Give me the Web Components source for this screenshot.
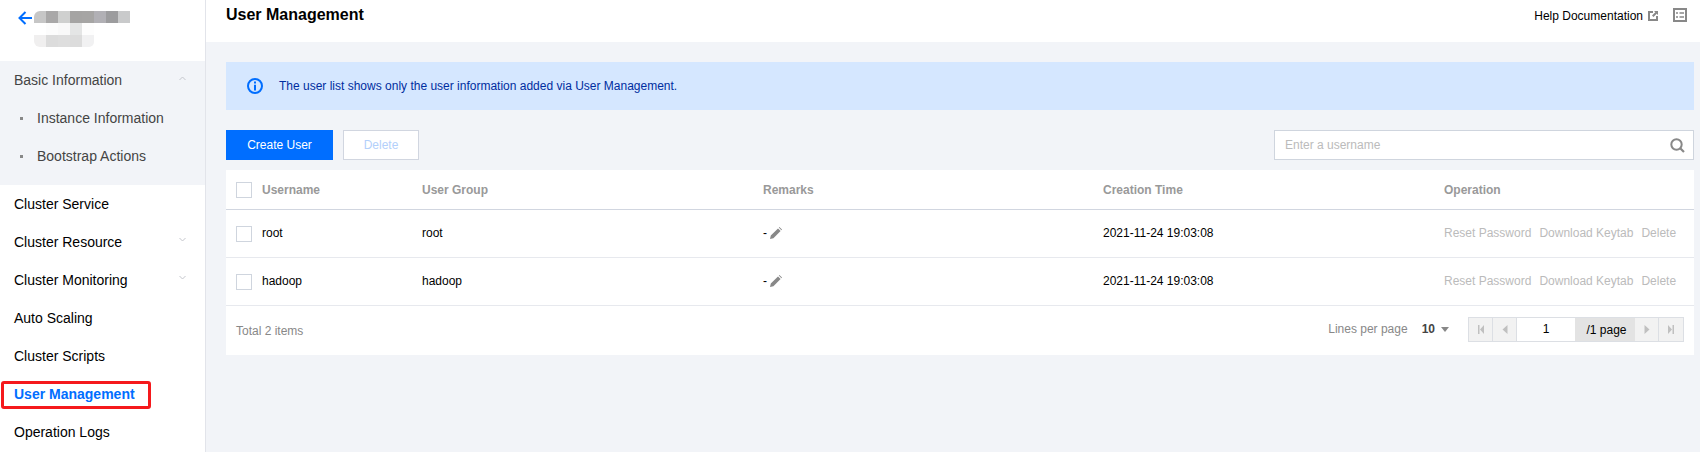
<!DOCTYPE html>
<html>
<head>
<meta charset="utf-8">
<title>User Management</title>
<style>
  html, body { margin: 0; height: 452px; overflow: hidden; background: #f2f4f8; }
  body { font: 12px "Liberation Sans", Arial, sans-serif; color: #000; }
</style>
</head>
<body>
<app-shell>
  <side-nav slot="side">
    <nav-group title="Basic Information">
      <nav-item sub>Instance Information</nav-item>
      <nav-item sub>Bootstrap Actions</nav-item>
    </nav-group>
    <nav-item>Cluster Service</nav-item>
    <nav-item arrow>Cluster Resource</nav-item>
    <nav-item arrow>Cluster Monitoring</nav-item>
    <nav-item>Auto Scaling</nav-item>
    <nav-item>Cluster Scripts</nav-item>
    <nav-item active>User Management</nav-item>
    <nav-item>Operation Logs</nav-item>
  </side-nav>
  <page-header slot="head" title="User Management"></page-header>
  <notice-bar>The user list shows only the user information added via User Management.</notice-bar>
  <tool-bar></tool-bar>
  <user-table>
    <user-row name="root" group="root" time="2021-11-24 19:03:08"></user-row>
    <user-row name="hadoop" group="hadoop" time="2021-11-24 19:03:08"></user-row>
  </user-table>
</app-shell>

<script>
// page frame: sidebar on the left, header and content on the right
class AppShell extends HTMLElement {
  constructor() {
    super();
    this.attachShadow({ mode: "open" }).innerHTML = `
      <style>
        :host { display: flex; height: 452px; }
        .main { flex: 1; min-width: 0; display: flex; flex-direction: column; }
        .content { padding: 20px 6px 0 20px; display: flex; flex-direction: column; }
      </style>
      <slot name="side"></slot>
      <div class="main">
        <slot name="head"></slot>
        <div class="content"><slot></slot></div>
      </div>`;
  }
}
customElements.define("app-shell", AppShell);

class SideNav extends HTMLElement {
  constructor() {
    super();
    this.attachShadow({ mode: "open" }).innerHTML = `
      <style>
        :host { display: block; flex: none; width: 205px; height: 452px; background: #fff; border-right: 1px solid #e2e4ea; overflow: hidden; }
        .top { height: 61px; display: flex; padding: 11px 0 0 18px; box-sizing: border-box; }
        .back { flex: none; }
        .mosaic { margin-left: 2px; display: grid; grid-template-columns: repeat(8, 12px); grid-auto-rows: 12px; align-self: flex-start; }
        .mosaic i { display: block; }
        .mosaic i:first-child { border-top-left-radius: 6px; }
        .mosaic i:nth-child(17) { border-bottom-left-radius: 6px; }
        .mosaic i:nth-child(21) { border-bottom-right-radius: 5px; }
      </style>
      <div class="top">
        <svg class="back" width="14" height="14" viewBox="0 0 14 14" fill="none" stroke="#006eff" stroke-width="2">
          <path d="M14 7H2M7.500 1 1.500 7l6 6"/>
        </svg>
        <div class="mosaic" id="logo"></div>
      </div>
      <slot></slot>`;
    // blurred-out instance name
    var cols = ["#c6c6c6","#a9a8a8","#cfd0cf","#a5a4a3","#a6a5a4","#b1b0b5","#9c9c9e","#c9cacb",
                "#fff","#fcfcfc","#f9f9f9","#e4e5e5","#fdfdfd","#fff","#fff","#fff",
                "#f0efef","#dcdcdc","#dedede","#dcdcdc","#f1f1f2","#fff","#fff","#fff"];
    var logo = this.shadowRoot.querySelector("#logo");
    cols.forEach(function (c) {
      var b = document.createElement("i");
      b.style.background = c;
      logo.appendChild(b);
    });
  }
}
customElements.define("side-nav", SideNav);

class NavGroup extends HTMLElement {
  constructor() {
    super();
    this.attachShadow({ mode: "open" }).innerHTML = `
      <style>
        :host { display: block; background: #f2f4f8; padding-bottom: 10px; }
        .title { height: 38px; display: flex; align-items: center; justify-content: space-between; padding: 0 19px 0 14px; font-size: 14px; color: #444; }
        svg { margin-top: -4px; }
      </style>
      <div class="title"><span id="t"></span>
        <svg width="7" height="5" viewBox="0 0 7 5" fill="none" stroke="#c4c6cc"><path d="M.5 4 3.500 1l3 3"/></svg>
      </div>
      <slot></slot>`;
  }
  connectedCallback() {
    this.shadowRoot.querySelector("#t").textContent = this.getAttribute("title");
  }
}
customElements.define("nav-group", NavGroup);

class NavItem extends HTMLElement {
  constructor() {
    super();
    this.attachShadow({ mode: "open" }).innerHTML = `
      <style>
        :host { display: flex; position: relative; height: 38px; align-items: center; justify-content: space-between; padding: 0 19px 0 14px; font-size: 14px; color: #000; }
        :host([sub]) { color: #444; padding-left: 37px; }
        :host([sub])::before { content: ""; position: absolute; left: 20px; top: 18px; width: 3px; height: 3px; background: #888; }
        :host([active]) { color: #006eff; font-weight: bold; }
        :host([active])::after { content: ""; position: absolute; left: 1px; top: 6px; width: 150px; height: 28px; box-sizing: border-box; border: 3px solid #f5191c; border-radius: 3px; }
        svg { display: none; margin-top: -5px; }
        :host([arrow]) svg { display: block; }
      </style>
      <span><slot></slot></span>
      <svg width="7" height="5" viewBox="0 0 7 5" fill="none" stroke="#c4c6cc"><path d="M.5 1l3 3 3-3"/></svg>`;
  }
}
customElements.define("nav-item", NavItem);

class PageHeader extends HTMLElement {
  constructor() {
    super();
    this.attachShadow({ mode: "open" }).innerHTML = `
      <style>
        :host { display: flex; flex: none; height: 42px; background: #fff; align-items: flex-start; justify-content: space-between; padding: 0 13px 0 20px; }
        h1 { margin: 6px 0 0; font-size: 16px; line-height: 18px; font-weight: bold; color: #000; }
        .right { display: flex; align-items: center; margin-top: 8px; height: 14px; color: #000; }
        .label { padding-top: 2px; }
        .ext { margin: 2px 0 0 5px; }
        .list { margin-left: 15px; }
      </style>
      <h1 id="t"></h1>
      <div class="right"><span class="label">Help Documentation</span>
        <svg class="ext" width="10" height="10" viewBox="0 0 10 10" fill="#888"><path d="M0 0h5v2H2v6h6V5h2v5H0z"/><path d="M6 0h4v4L8.700 2.700 5.500 6 4 4.500 7.300 1.300z"/></svg>
        <svg class="list" width="14" height="14" viewBox="0 0 14 14" fill="none" stroke="#888" stroke-width="2"><path d="M1 1h12v12H1z"/><path stroke-width="1.500" d="M3 5h2M6.500 5H11M3 9h2M6.500 9H11"/></svg>
      </div>`;
  }
  connectedCallback() {
    this.shadowRoot.querySelector("#t").textContent = this.getAttribute("title");
  }
}
customElements.define("page-header", PageHeader);

class NoticeBar extends HTMLElement {
  constructor() {
    super();
    this.attachShadow({ mode: "open" }).innerHTML = `
      <style>
        :host { display: flex; height: 48px; background: #d5e7ff; align-items: center; padding-left: 21px; color: #002da0; margin-bottom: 20px; }
        svg { margin-right: 16px; }
      </style>
      <svg width="16" height="16" viewBox="0 0 16 16" fill="none">
        <circle cx="8" cy="8" r="7" stroke="#006eff" stroke-width="2"/>
        <path fill="#006eff" d="M7 3.500h2v2H7zM7 6.800h2v5.700H7z"/>
      </svg>
      <span><slot></slot></span>`;
  }
}
customElements.define("notice-bar", NoticeBar);

class ToolBar extends HTMLElement {
  constructor() {
    super();
    this.attachShadow({ mode: "open" }).innerHTML = `
      <style>
        :host { display: flex; height: 30px; margin-bottom: 10px; }
        .btn { box-sizing: border-box; height: 30px; display: flex; align-items: center; justify-content: center; }
        .primary { width: 107px; background: #006eff; color: #fff; margin-right: 10px; }
        .disabled { width: 76px; background: #fff; border: 1px solid #d1d6e0; color: #b3d0fb; }
        .search { margin-left: auto; width: 420px; height: 30px; box-sizing: border-box; background: #fff; border: 1px solid #cfd5de; display: flex; align-items: center; justify-content: space-between; padding: 0 8px 0 10px; color: #bbb; }
      </style>
      <div class="btn primary">Create User</div>
      <div class="btn disabled">Delete</div>
      <div class="search"><span>Enter a username</span>
        <svg width="15" height="15" viewBox="0 0 15 15" fill="none" stroke="#888"><circle cx="6.500" cy="6.500" r="5.200" stroke-width="2"/><path stroke-width="2.200" d="m10.500 10.500 3.500 3.500"/></svg>
      </div>`;
  }
}
customElements.define("tool-bar", ToolBar);

// shared column widths so head and rows line up
var COLS = "grid-template-columns: 36px 160px 341px 340px 341px 1fr;";

var CHECK = `<span class="check"></span>`;
var CHECK_CSS = `.check { display: block; box-sizing: border-box; width: 16px; height: 16px; margin-left: 10px; background: #fff; border: 1px solid #cfd5de; }`;

class UserTable extends HTMLElement {
  constructor() {
    super();
    this.attachShadow({ mode: "open" }).innerHTML = `
      <style>
        :host { display: block; background: #fff; }
        .head { display: grid; ${COLS} height: 39px; align-items: center; border-bottom: 1px solid #d1d6e0; font-weight: bold; color: #999; }
        ${CHECK_CSS}
        .foot { height: 49px; display: flex; align-items: center; padding: 0 10px; color: #888; }
        .total { padding-top: 1px; }
        .per { margin-left: auto; display: flex; align-items: center; margin-top: -4px; }
        .size { margin-left: 14px; color: #444; font-weight: bold; }
        .caret { margin: 2px 19px 0 6px; width: 0; height: 0; border: 4px solid transparent; border-top: 5px solid #888; border-bottom: 0; }
        .pager { display: flex; height: 25px; box-sizing: border-box; border: 1px solid #dcdfe4; background: #f2f2f2; color: #000; margin-top: -3px; }
        .pager > * { display: flex; align-items: center; justify-content: center; box-sizing: border-box; }
        .nav { width: 24px; border-right: 1px solid #dcdfe4; }
        .nav:last-child { border-right: 0; }
        .num { width: 58px; background: #fff; }
        .tot { width: 60px; background: #e3e3e3; padding: 1px 0 0 3px; }
      </style>
      <div class="head">${CHECK}<span>Username</span><span>User Group</span><span>Remarks</span><span>Creation Time</span><span>Operation</span></div>
      <slot></slot>
      <div class="foot"><span class="total">Total 2 items</span>
        <div class="per">Lines per page<span class="size">10</span><span class="caret"></span></div>
        <div class="pager">
          <span class="nav"><svg width="8" height="9" viewBox="0 0 8 9" fill="#c0c0c0"><path d="M1 0h1.500v9H1zM7 0v9L3 4.500z"/></svg></span>
          <span class="nav"><svg width="8" height="9" viewBox="0 0 8 9" fill="#c0c0c0"><path d="M6.500 0v9l-5-4.500z"/></svg></span>
          <span class="num">1</span>
          <span class="tot">/1 page</span>
          <span class="nav"><svg width="8" height="9" viewBox="0 0 8 9" fill="#c0c0c0"><path d="M1.500 0v9l5-4.500z"/></svg></span>
          <span class="nav"><svg width="8" height="9" viewBox="0 0 8 9" fill="#c0c0c0"><path d="M1 0v9l4-4.500zM5.500 0H7v9H5.500z"/></svg></span>
        </div>
      </div>`;
  }
}
customElements.define("user-table", UserTable);

class UserRow extends HTMLElement {
  constructor() {
    super();
    this.attachShadow({ mode: "open" }).innerHTML = `
      <style>
        :host { display: grid; ${COLS} height: 48px; box-sizing: border-box; align-items: center; padding-bottom: 2px; border-bottom: 1px solid #e7e9ee; color: #000; }
        ${CHECK_CSS}
        .check { margin-top: 2px; }
        .rem { display: flex; align-items: center; gap: 3px; }
        .rem svg { margin-top: 1px; }
        .ops { color: #bbb; display: flex; gap: 8px; white-space: nowrap; }
      </style>
      ${CHECK}<span id="n"></span><span id="g"></span>
      <span class="rem">-
        <svg width="12" height="12" viewBox="0 0 12 12" fill="#888"><path d="M0 12l.8-3.400L8 1.400 10.600 4 3.400 11.200zM8.800.6 9.400 0 12 2.600l-.6.6z"/></svg>
      </span>
      <span id="t"></span>
      <span class="ops"><span>Reset Password</span><span>Download Keytab</span><span>Delete</span></span>`;
  }
  connectedCallback() {
    this.shadowRoot.querySelector("#n").textContent = this.getAttribute("name");
    this.shadowRoot.querySelector("#g").textContent = this.getAttribute("group");
    this.shadowRoot.querySelector("#t").textContent = this.getAttribute("time");
  }
}
customElements.define("user-row", UserRow);
</script>
</body>
</html>
